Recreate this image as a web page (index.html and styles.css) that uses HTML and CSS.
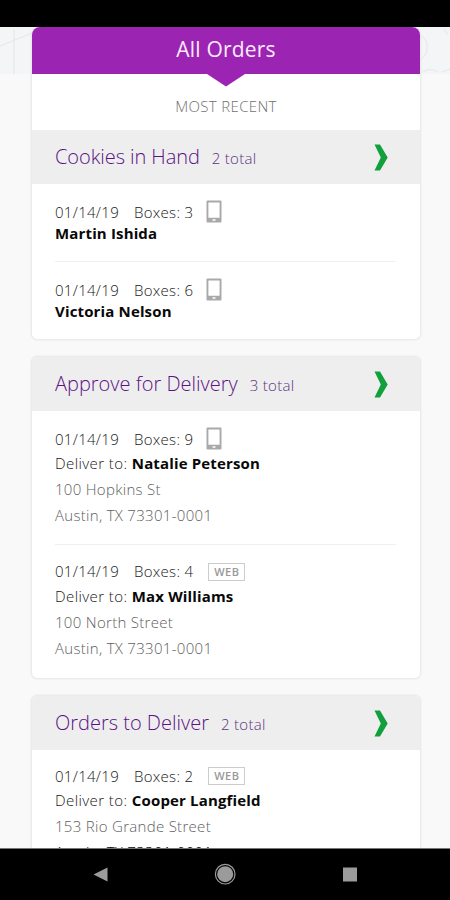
FILE: index.html
```html
<!DOCTYPE html>
<html lang="en">
<head>
<meta charset="utf-8">
<title>All Orders</title>
<link rel="stylesheet" href="styles.css">
</head>
<body>
<svg width="0" height="0" class="defs">
  <symbol id="phone" viewBox="0 0 16 23"><path fill="#a9a9a9" fill-rule="evenodd" d="M1.5 0.5h13a1 1 0 0 1 1 1v20a1 1 0 0 1-1 1h-13a1 1 0 0 1-1-1v-20a1 1 0 0 1 1-1zM2.4 2.4v15.4h11.2v-15.4zM6.5 19.3v1.4h3v-1.4z"/></symbol>
  <symbol id="chevron" viewBox="0 0 14 27"><path fill="#12a03c" d="M0.5 0.5H6L13.7 13.5L6 26.5H0.5L6.8 13.5z"/></symbol>
</svg>
<div class="screen">
  <div class="status"></div>
  <main class="content">
    <svg class="sketch" viewBox="0 0 450 47" fill="none" stroke="#e4e6e7"><path d="M0 19L32 6M14 2V47M418 9q9 0 9 11t-9 13M423 45q7-5 15 0M442 45l8-3M444 2l4 6"/></svg>
    <section class="card first">
      <h1 class="banner">All Orders<svg class="pointer" viewBox="0 0 38 13"><path fill="#9c24b2" d="M0 0H38L19 12.5z"/></svg></h1>
      <div class="recent"><span>MOST RECENT</span></div>
      <header class="head"><h2>Cookies in Hand</h2><span class="total">2 total</span><svg class="chev"><use href="#chevron"/></svg></header>
      <article class="order short">
        <div class="meta"><span class="date">01/14/19</span><span class="boxes">Boxes: 3</span><svg class="phone"><use href="#phone"/></svg></div>
        <div class="person"><b>Martin Ishida</b></div>
      </article>
      <article class="order short">
        <div class="meta"><span class="date">01/14/19</span><span class="boxes">Boxes: 6</span><svg class="phone"><use href="#phone"/></svg></div>
        <div class="person"><b>Victoria Nelson</b></div>
      </article>
    </section>
    <section class="card approve">
      <header class="head"><h2>Approve for Delivery</h2><span class="total">3 total</span><svg class="chev"><use href="#chevron"/></svg></header>
      <article class="order">
        <div class="meta"><span class="date">01/14/19</span><span class="boxes">Boxes: 9</span><svg class="phone"><use href="#phone"/></svg></div>
        <div class="person">Deliver to: <b>Natalie Peterson</b></div>
        <div class="addr">100 Hopkins St</div>
        <div class="addr">Austin, TX 73301-0001</div>
      </article>
      <article class="order">
        <div class="meta"><span class="date">01/14/19</span><span class="boxes">Boxes: 4</span><span class="web">WEB</span></div>
        <div class="person">Deliver to: <b>Max Williams</b></div>
        <div class="addr">100 North Street</div>
        <div class="addr">Austin, TX 73301-0001</div>
      </article>
    </section>
    <section class="card deliver">
      <header class="head"><h2>Orders to Deliver</h2><span class="total">2 total</span><svg class="chev"><use href="#chevron"/></svg></header>
      <article class="order">
        <div class="meta"><span class="date">01/14/19</span><span class="boxes">Boxes: 2</span><span class="web">WEB</span></div>
        <div class="person">Deliver to: <b>Cooper Langfield</b></div>
        <div class="addr">153 Rio Grande Street</div>
        <div class="addr cut">Austin, TX 73301-0001</div>
      </article>
    </section>
  </main>
  <nav class="nav">
    <svg viewBox="0 0 450 51" fill="#9b9b9b"><path d="M93.5 25.5L107.5 18.5V32.5z"/><circle cx="225.2" cy="25.2" r="8"/><circle cx="225.2" cy="25.2" r="9.8" fill="none" stroke="#9b9b9b" stroke-width="1.2"/><path d="M343 18.5h14v14h-14z"/></svg>
  </nav>
</div>
</body>
</html>
```
FILE: styles.css
```css
* { box-sizing: border-box; }
body { margin: 0; font-family: "Open Sans", sans-serif; background: #f9f9f9; }
svg { display: block; }
.defs { position: absolute; }
.screen { height: 900px; display: flex; flex-direction: column; overflow: hidden; }
.status { height: 27px; background: #000; flex: none; }
.content { position: relative; flex: 1; min-height: 0; overflow: hidden; padding: 0 30px 0 32px; }
.sketch { position: absolute; left: 0; top: 0; width: 450px; height: 47px; background: #f4f5f6; }
.card { position: relative; background: #fff; border-radius: 5px; box-shadow: 0 0 2px 1px #e5e5e5; margin-bottom: 18px; overflow: hidden; }
.first { border-radius: 8px 8px 5px 5px; }
.banner { position: relative; margin: 0; height: 47px; background: #9c24b2; color: #fbeafd; text-align: center; font-size: 21px; font-weight: 400; line-height: 45px; letter-spacing: 0.2px; }
.pointer { position: absolute; left: 175px; top: 47px; width: 38px; height: 13px; }
.recent { height: 56px; text-align: center; font-size: 15px; line-height: 64px; color: #707070; font-weight: 350; letter-spacing: 0.35px; }
.head { height: 54px; background: #eee; display: flex; align-items: baseline; padding: 0 32px 0 23px; line-height: 53px; }
.head h2 { margin: 0; font-size: 20px; font-weight: 300; color: #5c1285; }
.first h2 { letter-spacing: -0.07px; }
.total { margin-left: 12px; font-size: 15px; font-weight: 300; letter-spacing: 0.3px; color: #5a3280; }
.chev { width: 14px; height: 27px; margin-left: auto; align-self: center; }
.order { margin: 0 24px 0 23px; padding: 17px 0 16px; font-size: 15px; font-weight: 300; letter-spacing: 0.3px; white-space: nowrap; }
.order + .order { border-top: 1px solid #f0f0f0; padding: 15px 0 17px; }
.short + .short { padding: 17px 0 16px; }
.deliver .order { padding-top: 15px; }
.meta { display: flex; align-items: center; height: 22px; line-height: 21px; color: #202020; }
.boxes { margin-left: 15px; }
.phone { width: 16px; height: 23px; margin: -2px 0 0 13px; }
.web { margin-left: 15px; width: 37px; height: 18px; border: 1px solid #ccc; font-size: 11px; font-weight: 600; letter-spacing: 0.5px; line-height: 16px; text-align: center; color: #999; }
.person { height: 26px; line-height: 26px; color: #202020; letter-spacing: 0.42px; }
.short .person { height: 22px; line-height: 21px; }
.person b { color: #080808; font-weight: 700; letter-spacing: 0.15px; }
.addr { height: 26px; line-height: 27px; color: #606060; }
.approve .order + .order .meta { height: 23px; }
.deliver .addr { line-height: 26px; }
.cut { color: #000; }
.nav { height: 52px; flex: none; background: #000; border-top: 1px solid #777; }
.nav svg { width: 450px; height: 51px; }
```
